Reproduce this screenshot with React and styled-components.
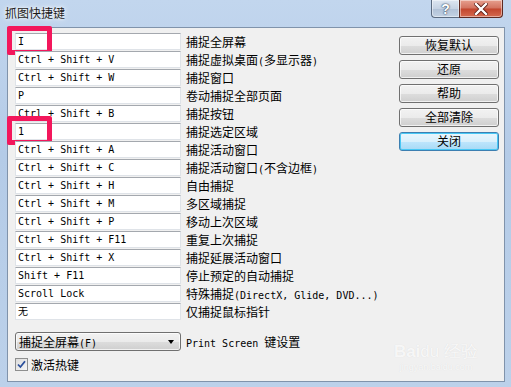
import React from 'react';
import styled, { createGlobalStyle } from 'styled-components';

const GlobalStyle = createGlobalStyle`
  html, body { margin: 0; padding: 0; background: #b9cfe9; }
  body { width: 511px; height: 387px; overflow: hidden; }
`;

const shortcuts = [
  { keys: 'I', label: '捕捉全屏幕', mark: true },
  { keys: 'Ctrl + Shift + V', label: '捕捉虚拟桌面(多显示器)' },
  { keys: 'Ctrl + Shift + W', label: '捕捉窗口' },
  { keys: 'P', label: '卷动捕捉全部页面' },
  { keys: 'Ctrl + Shift + B', label: '捕捉按钮' },
  { keys: '1', label: '捕捉选定区域', mark: true },
  { keys: 'Ctrl + Shift + A', label: '捕捉活动窗口' },
  { keys: 'Ctrl + Shift + C', label: '捕捉活动窗口(不含边框)' },
  { keys: 'Ctrl + Shift + H', label: '自由捕捉' },
  { keys: 'Ctrl + Shift + M', label: '多区域捕捉' },
  { keys: 'Ctrl + Shift + P', label: '移动上次区域' },
  { keys: 'Ctrl + Shift + F11', label: '重复上次捕捉' },
  { keys: 'Ctrl + Shift + X', label: '捕捉延展活动窗口' },
  { keys: 'Shift + F11', label: '停止预定的自动捕捉' },
  { keys: 'Scroll Lock', label: '特殊捕捉(DirectX, Glide, DVD...)' },
  { keys: '无', label: '仅捕捉鼠标指针' },
];

const actions = ['恢复默认', '还原', '帮助', '全部清除', '关闭'];

// ascii runs look like the old bitmap font, so give them the mono face
function Mixed({ text }) {
  return text.split(/([\x20-\x7e]+)/).map((part, i) =>
    /^[\x20-\x7e]+$/.test(part) ? <Mono key={i}>{part}</Mono> : part
  );
}

export default function App() {
  return (
    <>
      <GlobalStyle />
      <Window>
        <TitleBar>
          <Title>抓图快捷键</Title>
          <Caption>
            <HelpButton>?</HelpButton>
            <CloseButton>
              <svg width="14" height="12" viewBox="0 0 14 12">
                <path d="M2 1 L12 11 M12 1 L2 11" stroke="#5a1a12" strokeWidth="4" strokeLinecap="square" />
                <path d="M2 1 L12 11 M12 1 L2 11" stroke="#ffffff" strokeWidth="2.4" strokeLinecap="square" />
              </svg>
            </CloseButton>
          </Caption>
        </TitleBar>

        <Client>
          <Main>
            <List>
              {shortcuts.map((s) => (
                <Row key={s.label}>
                  <KeyBox>
                    {s.keys}
                    {s.mark && <Marker />}
                  </KeyBox>
                  <Label><Mixed text={s.label} /></Label>
                </Row>
              ))}
            </List>
            <Buttons>
              {actions.map((a, i) => (
                <Button key={a} $default={i === actions.length - 1}>{a}</Button>
              ))}
            </Buttons>
          </Main>

          <Footer>
            <Row>
              <Select>
                <span><Mixed text="捕捉全屏幕(F)" /></span>
                <Arrow />
              </Select>
              <Label><Mixed text="Print Screen 键设置" /></Label>
            </Row>
            <Check>
              <Box>
                <svg width="9" height="9" viewBox="0 0 9 9">
                  <path d="M1 4.5 L3.4 7 L8 1.2" fill="none" stroke="#2a4f9c" strokeWidth="1.8" />
                </svg>
              </Box>
              激活热键
            </Check>
          </Footer>
          <Watermark>
            <b>Bai</b>du 经验
            <small>jingyan.baidu.com</small>
          </Watermark>
        </Client>
      </Window>
    </>
  );
}

const Window = styled.div`
  width: 511px;
  height: 387px;
  box-sizing: border-box;
  display: flex;
  flex-direction: column;
  padding: 0 6px 5px 7px;
  background: linear-gradient(180deg, #c2d6ee 0%, #b4cbe7 40%, #bcd1ea 100%);
  font-family: "Noto Sans CJK SC", "Liberation Sans", sans-serif;
`;

const TitleBar = styled.div`
  height: 27px;
  display: flex;
  justify-content: space-between;
  align-items: flex-start;
`;

const Title = styled.div`
  font-size: 12px;
  line-height: 26px;
  color: #1b1b1b;
  margin-left: -2px;
  text-shadow: 0 0 6px #ffffff, 0 0 3px #ffffff;
`;

const Caption = styled.div`
  display: flex;
  margin-right: 2px;
`;

const CapButton = styled.div`
  height: 17px;
  border: 1px solid #5b6b80;
  border-top: none;
  display: flex;
  align-items: center;
  justify-content: center;
  box-shadow: inset 0 0 0 1px rgba(255, 255, 255, 0.45);
`;

const HelpButton = styled(CapButton)`
  width: 27px;
  border-right: none;
  border-radius: 0 0 0 4px;
  background: linear-gradient(180deg, #dde6f1 0%, #c6d3e3 50%, #b0c1d6 51%, #c3d2e4 100%);
  color: #ffffff;
  font-family: "Liberation Sans", sans-serif;
  font-weight: bold;
  font-size: 14px;
  text-shadow: 0 0 2px #2d3c52, 0 0 1px #2d3c52;
`;

const CloseButton = styled(CapButton)`
  width: 42px;
  border-color: #5e2a22;
  border-radius: 0 0 4px 0;
  background: linear-gradient(180deg, #e7a08f 0%, #d2725f 48%, #c2452d 52%, #d46a4f 100%);
`;

const Client = styled.div`
  flex: 1;
  position: relative;
  background: #f0f0f0;
  border: 1px solid #8093ab;
  padding: 5px 0 0 7px;
  display: flex;
  flex-direction: column;
`;

const Main = styled.div`
  display: flex;
  justify-content: space-between;
`;

const List = styled.div`
  display: flex;
  flex-direction: column;
`;

const Row = styled.div`
  display: flex;
  align-items: center;
  height: 18px;
`;

const KeyBox = styled.div`
  position: relative;
  box-sizing: border-box;
  width: 166px;
  height: 17px;
  margin-bottom: 1px;
  background: #ffffff;
  border: 1px solid #dfe3e8;
  border-top-color: #a4a8ae;
  padding-left: 2px;
  font-family: "DejaVu Sans Mono", "Noto Sans CJK SC", monospace;
  font-size: 10px;
  line-height: 15px;
  color: #000;
  white-space: pre;
`;

const Marker = styled.div`
  position: absolute;
  left: -9px;
  top: -8px;
  width: 45px;
  height: 29px;
  box-sizing: border-box;
  border: 5px solid #f3175c;
  border-radius: 2px;
`;

const Label = styled.div`
  margin: -1px 0 0 5px;
  font-size: 12px;
  color: #000;
  white-space: pre;
`;

const Mono = styled.span`
  font-family: "DejaVu Sans Mono", monospace;
  font-size: 10px;
`;

const Buttons = styled.div`
  display: flex;
  flex-direction: column;
  gap: 5px;
  margin: 3px 5px 0 0;
`;

const Button = styled.div`
  box-sizing: border-box;
  width: 100px;
  height: 19px;
  border-radius: 3px;
  border: 1px solid ${(p) => (p.$default ? '#3c7fb1' : '#707070')};
  background: ${(p) =>
    p.$default
      ? 'linear-gradient(180deg, #eaf6fd 0%, #d9f0fc 50%, #bee6fd 51%, #a7d9f5 100%)'
      : 'linear-gradient(180deg, #f2f2f2 0%, #ebebeb 50%, #dddddd 51%, #cfcfcf 100%)'};
  box-shadow: inset 0 0 0 1px ${(p) => (p.$default ? '#48c8f5' : 'rgba(255,255,255,0.7)')};
  font-size: 12px;
  line-height: 16px;
  text-align: center;
  color: #000;
`;

const Footer = styled.div`
  margin-top: 12px;
  display: flex;
  flex-direction: column;
  gap: 5px;
`;

const Select = styled.div`
  box-sizing: border-box;
  width: 166px;
  height: 19px;
  border: 1px solid #707070;
  border-radius: 3px;
  background: linear-gradient(180deg, #f2f2f2 0%, #ebebeb 50%, #dddddd 51%, #cfcfcf 100%);
  box-shadow: inset 0 0 0 1px rgba(255, 255, 255, 0.7);
  display: flex;
  align-items: center;
  justify-content: space-between;
  padding: 0 6px 0 3px;
  font-size: 12px;
  color: #000;
  margin-bottom: 1px;
`;

const Arrow = styled.div`
  width: 0;
  height: 0;
  border-left: 3.5px solid transparent;
  border-right: 3.5px solid transparent;
  border-top: 4px solid #000;
`;

const Check = styled.div`
  display: flex;
  align-items: center;
  gap: 3px;
  font-size: 12px;
  color: #000;
`;

const Box = styled.div`
  box-sizing: border-box;
  width: 13px;
  height: 13px;
  border: 1px solid #8e8f8f;
  background: linear-gradient(135deg, #dcdcdc, #f6f6f6);
  display: flex;
  align-items: center;
  justify-content: center;
`;

const Watermark = styled.div`
  position: absolute;
  right: 26px;
  bottom: 8px;
  color: rgba(255, 255, 255, 0.8);
  font-family: "Liberation Sans", sans-serif;
  font-size: 17px;
  text-align: center;
  line-height: 18px;
  text-shadow: 0 0 1px rgba(0, 0, 0, 0.1);
  & small {
    display: block;
    font-size: 9px;
    line-height: 12px;
  }
`;
